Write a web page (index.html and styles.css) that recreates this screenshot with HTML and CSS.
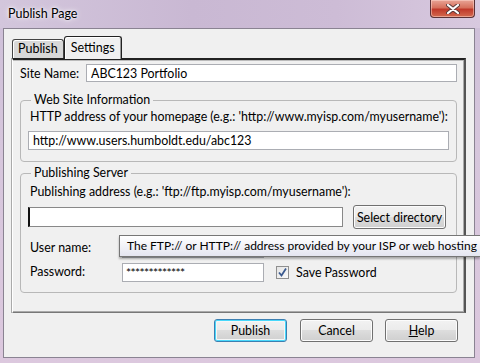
FILE: index.html
```html
<!DOCTYPE html>
<html lang="en">
<head>
    <meta charset="UTF-8">
    <title>Publish Page</title>
    <link rel="stylesheet" href="styles.css">
</head>
<body>
<div class="fenster">
    <!-- Titelleiste -->
    <div class="titelleiste">
        <span class="titel">Publish Page</span>
        <button class="schliessen" aria-label="Close">
            <svg width="14" height="10" viewBox="0 0 14 10">
                <path d="M2 1 L12 9 M12 1 L2 9" stroke="#5a3a3a" stroke-width="4" stroke-linecap="round"/>
                <path d="M2 1 L12 9 M12 1 L2 9" stroke="#fff" stroke-width="2.2" stroke-linecap="round"/>
            </svg>
        </button>
    </div>

    <!-- Inhalt -->
    <div class="inhalt">
        <div class="reiter">
            <div class="reiter-knopf">Publish</div>
            <div class="reiter-knopf aktiv">Settings</div>
        </div>

        <div class="seite">
            <div class="zeile-name">
                <label class="etikett">Site Name:</label>
                <input type="text" class="feld feld-name" value="ABC123 Portfolio">
            </div>

            <fieldset class="gruppe gruppe-web">
                <legend>Web Site Information</legend>
                <div class="etikett">HTTP address of your homepage (e.g.: 'http://www.myisp.com/myusername'):</div>
                <input type="text" class="feld feld-voll" value="http://www.users.humboldt.edu/abc123">
            </fieldset>

            <fieldset class="gruppe gruppe-server">
                <legend>Publishing Server</legend>
                <div class="etikett">Publishing address (e.g.: 'ftp://ftp.myisp.com/myusername'):</div>
                <div class="zeile-adresse">
                    <input type="text" class="feld feld-adresse" value="">
                    <button class="knopf knopf-ordner">Select directory</button>
                </div>
                <div class="zeile-konto">
                    <span class="etikett">User name:</span>
                    <input type="text" class="feld feld-konto" value="">
                </div>
                <div class="zeile-konto zeile-pass">
                    <span class="etikett">Password:</span>
                    <input type="text" class="feld feld-konto feld-pass" value="*************">
                    <label class="merken">
                        <span class="haken">
                            <svg width="11" height="11" viewBox="0 0 11 11">
                                <path d="M2 5.5 L4.5 8.5 L9 1.5" fill="none" stroke="#3b5a8f" stroke-width="1.8"/>
                            </svg>
                        </span>
                        Save Password
                    </label>
                </div>
            </fieldset>
        </div>

        <div class="knopfleiste">
            <button class="knopf knopf-haupt">Publish</button>
            <button class="knopf">Cancel</button>
            <button class="knopf"><u>H</u>elp</button>
        </div>

        <!-- Tooltip ueber dem Benutzerfeld -->
        <div class="tooltip">The FTP:// or HTTP:// address provided by your ISP or web hosting</div>
    </div>
</div>
</body>
</html>
```

FILE: styles.css
```css
/* Grundstil */
body {
    margin: 0;
    width: 480px;
    height: 363px;
    overflow: hidden;
    font-family: "Lato", "Liberation Sans", sans-serif;
    font-size: 12px;
    color: #000;
    background: linear-gradient(180deg, #cdbfd8 0%, #d6c6dc 40%, #dcc8de 100%);
}

.fenster {
    position: relative;
    height: 363px;
}

/* Titelleiste */
.titelleiste {
    height: 28px;
    display: flex;
    justify-content: space-between;
    align-items: flex-start;
    background: linear-gradient(90deg, #d3c6dc 0%, #c9b8d3 40%, #cdbcd6 70%, #d8c9df 100%);
}

.titel {
    margin: 6px 0 0 8px;
    font-size: 12.5px;
    text-shadow: 0 0 6px #fff, 0 0 3px #fff;
}

.schliessen {
    width: 45px;
    height: 18px;
    margin-right: 5px;
    padding: 0;
    border: 1px solid #5a3236;
    border-top: none;
    border-radius: 0 0 4px 4px;
    background: linear-gradient(180deg, #e8a496 0%, #d6715d 45%, #c0392a 55%, #d26a4f 100%);
    display: flex;
    align-items: center;
    justify-content: center;
    box-shadow: inset 0 0 0 1px rgba(255, 220, 210, 0.5);
}

/* Inhalt */
.inhalt {
    position: relative;
    width: 470px;
    height: 328px;
    margin-left: 3px;
    background-color: #f0f0f0;
    border: 1px solid #8a8392;
}

.reiter {
    display: flex;
    align-items: flex-end;
    height: 29px;
    padding-left: 8px;
}

.reiter-knopf {
    height: 18px;
    padding: 0 5px;
    line-height: 18px;
    font-size: 12.5px;
    background: #d8d8d8;
    border: 1px solid #444;
    border-bottom: none;
    border-radius: 3px 3px 0 0;
    box-shadow: inset 1px 1px 0 #fff;
}

.reiter-knopf.aktiv {
    height: 22px;
    line-height: 22px;
    padding: 0 6px;
    background: #f0f0f0;
    position: relative;
    top: 1px;
    border-color: #222;
    box-shadow: inset 1px 1px 0 #fff, inset -1px 0 0 #999;
}

/* Reiterseite */
.seite {
    box-sizing: border-box;
    width: 454px;
    height: 255px;
    margin-left: 8px;
    padding: 4px 7px 0 7px;
    border-top: 2px solid #222;
    border-right: 2px solid #555;
    border-bottom: 1px solid #777;
    border-left: 1px solid #fff;
    box-shadow: inset -1px -1px 0 #aaa, inset 0 1px 0 #bbb, -1px 0 0 #aaa;
}

.zeile-name {
    display: flex;
    align-items: center;
    height: 18px;
}

.zeile-name .etikett {
    width: 66px;
}

.etikett,
.gruppe legend,
.merken,
.knopf {
    font-size: 12.4px;
}

.feld {
    box-sizing: border-box;
    height: 19px;
    padding: 0 4px;
    font-family: inherit;
    font-size: 12.4px;
    border: 1px solid #abadb3;
    background: #fff;
    outline: none;
}

.feld-name {
    width: 371px;
    height: 18px;
}

/* Gruppenrahmen */
.gruppe {
    margin: 11px 0 0 0;
    padding: 2px 7px 11px 7px;
    border: 1px solid #b8b8b8;
    border-radius: 4px;
    width: 421px;
}

.gruppe legend {
    padding: 0 3px;
    margin-left: 3px;
    line-height: 14px;
}

.gruppe .etikett {
    padding-left: 2px;
    line-height: 16px;
    white-space: nowrap;
}

.feld-voll {
    width: 421px;
    margin-top: 6px;
}

.gruppe-server {
    margin-top: 4px;
    padding-top: 4px;
    padding-bottom: 10px;
}

.zeile-adresse {
    display: flex;
    align-items: center;
    margin-top: 5px;
}

.feld-adresse {
    width: 315px;
    height: 20px;
    border-color: #888;
    border-left: 2px solid #111;
}

.knopf {
    box-sizing: border-box;
    height: 23px;
    width: 73px;
    padding: 0;
    font-family: inherit;
    color: #000;
    border: 1px solid #707070;
    border-radius: 3px;
    background: linear-gradient(180deg, #f2f2f2 0%, #ebebeb 49%, #dddddd 50%, #cfcfcf 100%);
    box-shadow: inset 0 0 0 1px #fcfcfc;
}

.knopf-ordner {
    width: 93px;
    height: 24px;
    margin-left: 10px;
}

.zeile-konto {
    display: flex;
    align-items: center;
    height: 20px;
    margin-top: 9px;
}

.zeile-konto .etikett {
    width: 92px;
}

.feld-konto {
    width: 142px;
}

.zeile-pass {
    margin-top: 4px;
}

.feld-pass {
    font-size: 12px;
    letter-spacing: -0.6px;
    padding-left: 3px;
}

.merken {
    display: flex;
    align-items: center;
    margin-left: 12px;
}

.haken {
    box-sizing: border-box;
    width: 13px;
    height: 13px;
    margin-right: 7px;
    border: 1px solid #8f8f8f;
    background: linear-gradient(135deg, #e4e4e4, #fafafa);
    display: flex;
    align-items: center;
    justify-content: center;
}

/* Knopfleiste */
.knopfleiste {
    display: flex;
    justify-content: flex-end;
    gap: 12px;
    margin-top: 6px;
    padding-right: 16px;
}

.knopf-haupt {
    border-color: #3c7fb1;
    box-shadow: inset 0 0 0 1px #48d8fb, inset 0 0 0 2px #f6f6f6;
    margin-right: 1px;
}

/* Tooltip */
.tooltip {
    position: absolute;
    left: 115px;
    top: 206px;
    width: 361px;
    height: 22px;
    box-sizing: border-box;
    padding: 0 0 0 7px;
    font-size: 12px;
    line-height: 20px;
    white-space: nowrap;
    border: 1px solid #767676;
    border-right: none;
    background: linear-gradient(180deg, #ffffff 0%, #e4e5f0 100%);
    box-shadow: 0 2px 2px rgba(0, 0, 0, 0.3);
}
```
